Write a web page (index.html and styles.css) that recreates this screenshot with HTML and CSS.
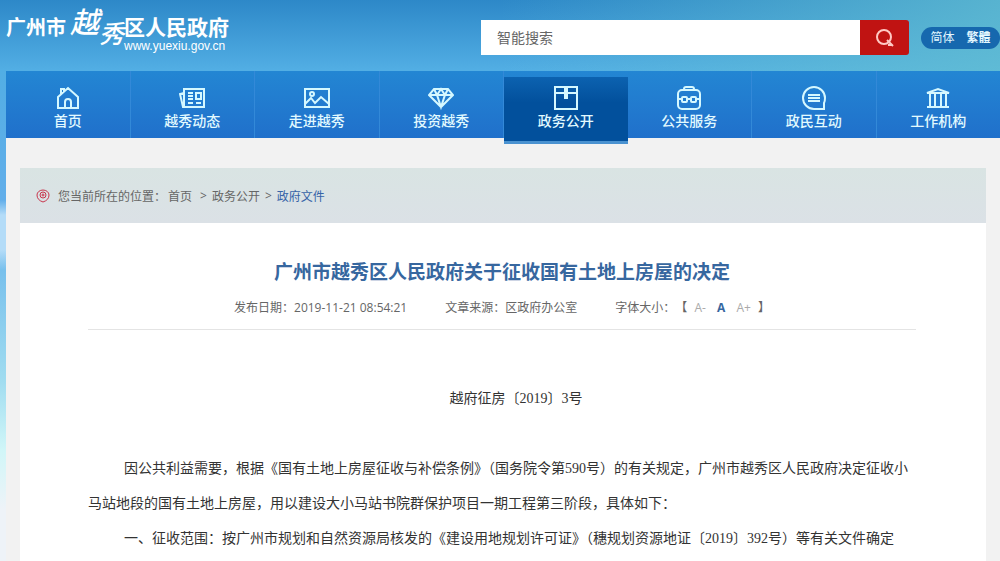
FILE: index.html
```
<!DOCTYPE html>
<html lang="zh-CN">
<head>
  <meta charset="UTF-8">
  <title>广州市越秀区人民政府</title>
  <link rel="stylesheet" href="styles.css">
</head>
<body>

<header class="header">
  <a class="logo" href="#">
    <span class="logo-city">广州市</span>
    <span class="logo-brush"><i class="yue">越</i><i class="xiu">秀</i></span>
    <span class="logo-right">
      <span class="logo-gov">区人民政府</span>
      <span class="logo-url">www.yuexiu.gov.cn</span>
    </span>
  </a>

  <form class="search">
    <input type="text" aria-label="智能搜索" placeholder="智能搜索">
    <button type="button" aria-label="搜索">
      <svg width="20" height="20" viewBox="0 0 20 20"><circle cx="9" cy="9" r="7"/><path d="M12 12l6 6M13 17h4"/></svg>
    </button>
  </form>

  <div class="lang">
    <a href="#">简体</a>
    <a href="#" class="trad">繁體</a>
  </div>
</header>

<div class="page">
  <nav class="nav">
    <a href="#">
      <svg viewBox="0 0 26 26"><path d="M3 12L13 3l10 9v11H3zM6 9V4h3v3M10 23v-6a3 3 0 0 1 6 0v6"/></svg>
      首页
    </a>
    <a href="#">
      <svg viewBox="0 0 26 26"><path d="M5 4h20v18H4L1 9l4-1zM5 4v17M9 8h5M9 11h5M9 14h5M9 18h5M17 18h5M17 8h5v6h-5z"/></svg>
      越秀动态
    </a>
    <a href="#">
      <svg viewBox="0 0 26 26"><path d="M1 4h24v18H1zM1 19l6-6 4 5 6-6 8 7"/><circle cx="8" cy="9" r="2"/></svg>
      走进越秀
    </a>
    <a href="#">
      <svg viewBox="0 0 26 26"><path d="M6 4h14l5 6-12 12L1 10zM1 10h24M6 4l3 6 4 12 4-12 3-6M9 10l4-6 4 6"/></svg>
      投资越秀
    </a>
    <a href="#" class="active">
      <svg viewBox="0 0 26 26"><path d="M2 2h22v22H2zM2 8h22M12 2v11h2V2"/></svg>
      政务公开
    </a>
    <a href="#">
      <svg viewBox="0 0 26 26"><rect x="2" y="5" width="22" height="19" rx="4"/><path d="M8 5V4q0-2 2-2h6q2 0 2 2v1M2 14h4M11 14h4M20 14h4"/><rect x="6" y="12" width="5" height="5" rx="1"/><rect x="15" y="12" width="5" height="5" rx="1"/></svg>
      公共服务
    </a>
    <a href="#">
      <svg viewBox="0 0 26 26"><path d="M24 13A11 11 0 1 0 13 24h10v-6q1-2 1-5zM7 10h12M7 13h12M7 16h12"/></svg>
      政民互动
    </a>
    <a href="#">
      <svg viewBox="0 0 26 26"><path d="M2 8l11-4 11 4zM5 9v13M10 9v13M16 9v13M21 9v13M2 22h22"/></svg>
      工作机构
    </a>
  </nav>

  <div class="main">
    <div class="crumbs">
      <svg width="14" height="14" viewBox="0 0 14 14"><path d="M7 13Q1 11 1 6a6 5 0 0 1 12 0q0 5-6 7z"/><circle cx="7" cy="6" r="3"/><circle cx="7" cy="6" r="1"/></svg>
      <span>您当前所在的位置：</span>
      <a href="#" class="home">首页</a>
      <span class="sep">&gt;</span>
      <a href="#">政务公开</a>
      <span class="sep">&gt;</span>
      <a href="#" class="current">政府文件</a>
    </div>

    <article class="article">
      <h1>广州市越秀区人民政府关于征收国有土地上房屋的决定</h1>
      <div class="meta">
        <span>发布日期：2019-11-21 08:54:21</span>
        <span>文章来源：区政府办公室</span>
        <span class="size">字体大小：【
          <a href="#">A-</a>
          <a href="#" class="on">A</a>
          <a href="#">A+</a>
        】</span>
      </div>
      <div class="content">
        <p class="number">越府征房〔2019〕3号</p>
        <p>因公共利益需要，根据《国有土地上房屋征收与补偿条例》（国务院令第590号）的有关规定，广州市越秀区人民政府决定征收小马站地段的国有土地上房屋，用以建设大小马站书院群保护项目一期工程第三阶段，具体如下：</p>
        <p>一、征收范围：按广州市规划和自然资源局核发的《建设用地规划许可证》（穗规划资源地证〔2019〕392号）等有关文件确定</p>
      </div>
    </article>
  </div>
</div>

</body>
</html>
```

FILE: styles.css
```
* {
  box-sizing: border-box;
}
body {
  margin: 0;
  min-height: 100vh;
  display: flex;
  flex-direction: column;
  font-family: "Open Sans", "Noto Sans CJK SC", sans-serif;
  font-size: 12px;
  color: #666;
  background: linear-gradient(180deg, #2d88c8 0, #52aee4 70px, #62aeea 200px, #b4dcf8 215px, #b4dcf8 250px, #78c0ec 270px, #a0dcf0 380px, #d0f6f8 450px, #eef3f8 510px);
}
a {
  color: inherit;
  text-decoration: none;
}
.header {
  height: 71px;
  display: flex;
  align-items: flex-start;
  padding-left: 6px;
  background: linear-gradient(90deg, rgba(98,190,210,0) 50%, rgba(98,190,210,0.8) 100%);
}

/* logo */
.logo {
  display: flex;
  color: #fff;
  font-weight: bold;
}
.logo-city {
  margin-top: 13px;
  font-size: 20px;
  line-height: 30px;
}
.logo-brush {
  display: flex;
  margin: 0 0 0 4px;
  line-height: 36px;
  font-weight: 500;
}
.yue {
  margin-top: 4px;
  font-size: 29px;
}
.xiu {
  margin-top: 15px;
  font-size: 25px;
}
.logo-right {
  display: flex;
  flex-direction: column;
  margin-top: 16px;
}
.logo-gov {
  font-size: 21px;
  line-height: 23px;
}
.logo-url {
  font-family: "Liberation Sans", sans-serif;
  font-size: 12px;
  line-height: 14px;
  font-weight: normal;
}

/* search */
.search {
  display: flex;
  width: 428px;
  height: 35px;
  margin: 20px 12px 0 auto;
}
.search input {
  flex: 1;
  min-width: 0;
  border: 0;
  padding: 0 16px;
  background: #fff;
  font-family: inherit;
  font-size: 14px;
  color: #555;
}
.search input::placeholder {
  color: #666;
}
.search button {
  width: 49px;
  padding: 0;
  border: 0;
  border-radius: 0 3px 3px 0;
  background: #c01312;
  cursor: pointer;
}
.search svg {
  display: block;
  margin: 0 auto;
  fill: none;
  stroke: #ffc9c4;
  stroke-width: 2;
}
.lang {
  display: flex;
  justify-content: center;
  gap: 12px;
  width: 79px;
  margin-top: 27px;
  border-radius: 11px;
  background: #1668ae;
  color: #e4f8ff;
  font-size: 12px;
  line-height: 22px;
}
.trad {
  font-weight: bold;
}

.page {
  flex: 1;
  display: flex;
  flex-direction: column;
  margin-left: 6px;
  background: #f2f2f2;
}

/* nav */
.nav {
  display: flex;
  height: 67px;
  background: linear-gradient(180deg, #2386d3, #2070cb);
}
.nav a {
  flex: 1;
  display: flex;
  flex-direction: column;
  align-items: center;
  padding-top: 14px;
  border-right: 1px solid #3389d8;
  color: #e2faff;
  font-size: 14px;
  font-weight: 500;
  line-height: 20px;
}
.nav a:last-child {
  border-right: 0;
}
.nav svg {
  width: 26px;
  height: 26px;
  fill: none;
  stroke: #d5f8ff;
  stroke-width: 2;
}
.nav .active {
  height: 67px;
  margin-top: 6px;
  padding-top: 8px;
  border-right: 0;
  border-bottom: 3px solid #4a92d0;
  background: linear-gradient(180deg, #0c62b0, #02509c 40%, #02509c);
}

.main {
  flex: 1;
  display: flex;
  flex-direction: column;
  margin: 30px 14px 0;
}
.crumbs {
  display: flex;
  align-items: center;
  height: 55px;
  padding-left: 16px;
  background: linear-gradient(180deg, #d9e4e3, #dbe1e6);
}
.crumbs svg {
  margin-right: 8px;
  fill: none;
  stroke: #c8344c;
}
.crumbs .home {
  margin: 0 3px 0 2px;
}
.sep {
  margin: 0 5px;
}
.current {
  color: #3764a8;
}

/* article */
.article {
  flex: 1;
  padding: 33px 70px 0 68px;
  background: #fff;
}
h1 {
  margin: 0;
  text-align: center;
  font-size: 19px;
  line-height: 32px;
  color: #37679f;
}
.meta {
  display: flex;
  justify-content: center;
  gap: 38px;
  padding: 9px 0 10px;
  border-bottom: 1px solid #e4e4e4;
  line-height: 22px;
  text-spacing-trim: space-all;
}
.size a {
  margin: 0 4px;
  color: #aaa;
}
.size .on {
  color: #37679f;
  font-weight: bold;
}
.content {
  padding-top: 51px;
  font-family: "Liberation Serif", "Noto Sans CJK SC", serif;
  font-size: 14px;
  line-height: 35px;
  color: #333;
}
.content p {
  margin: 0;
  text-indent: 36px;
}
.content .number {
  margin-bottom: 35px;
  text-align: center;
  text-indent: 28px;
}
```
